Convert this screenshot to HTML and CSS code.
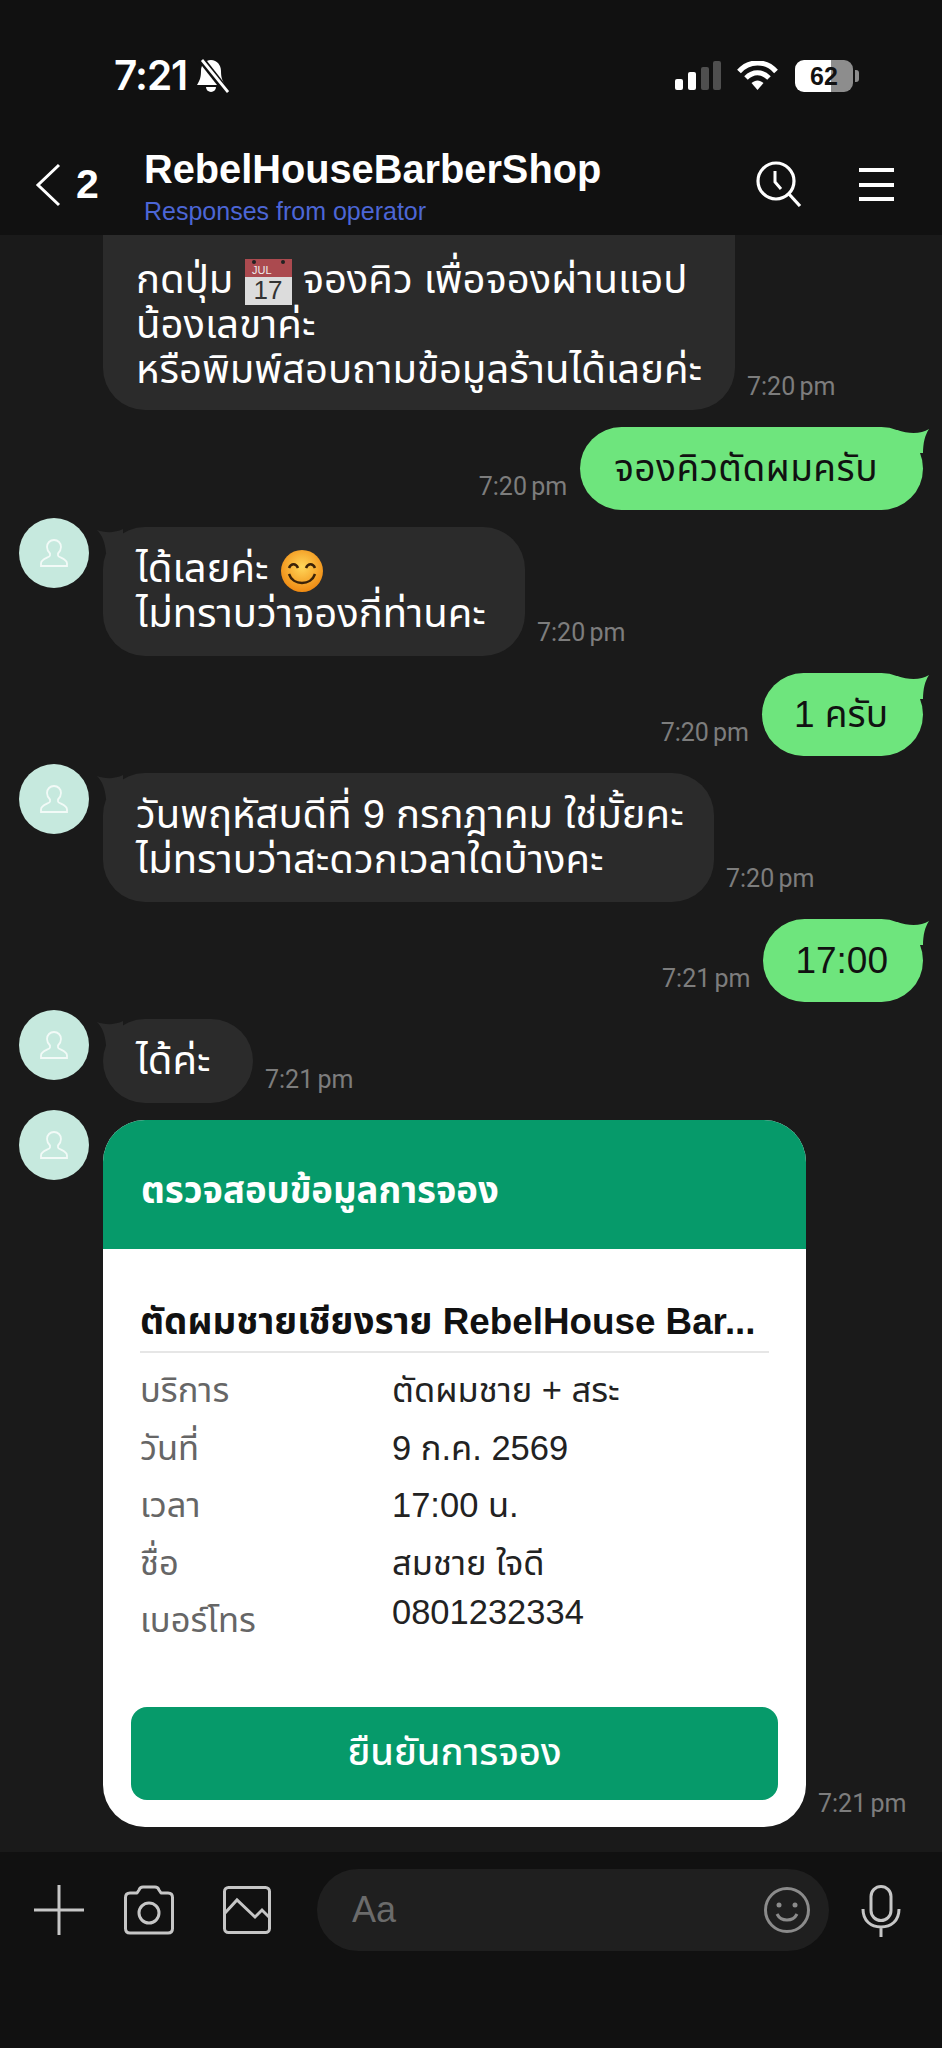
FILE: index.html
```html
<!DOCTYPE html>
<html lang="th">
<head>
<meta charset="utf-8">
<title>RebelHouseBarberShop</title>
<link rel="stylesheet" href="styles.css">
</head>
<body>
<div class="screen">
  <header class="top">
    <div class="status">
      <div class="status-left">
        <span class="clock">7:21</span>
        <svg class="bell" width="33" height="34" viewBox="0 0 33 34"><path d="M15 1c-6 0-10 5-10 11 0 6-1 9-4 14h28c-3-5-4-8-4-14 0-6-4-11-10-11z" fill="#fff"/><path d="M10 28a5 5 0 0 0 10 0z" fill="#fff"/><path d="M5 0l26 33" stroke="#111" stroke-width="7"/><path d="M6 1l26 32" stroke="#fff" stroke-width="2.800"/></svg>
      </div>
      <div class="status-right">
        <svg width="46" height="30" viewBox="0 0 46 30"><rect x="0" y="18" width="8" height="11" rx="2" fill="#fff"/><rect x="13" y="11" width="8" height="18" rx="2" fill="#fff"/><rect x="26" y="6" width="8" height="23" rx="2" fill="#4f4f4f"/><rect x="38" y="0" width="8" height="29" rx="2" fill="#4f4f4f"/></svg>
        <svg class="wifi" width="41" height="30" viewBox="0 0 41 30"><path d="M2 10.5C12-1 29-1 39 10.5" fill="none" stroke="#fff" stroke-width="5"/><path d="M9 17c7-7 16-7 23 0" fill="none" stroke="#fff" stroke-width="5"/><path d="M14.500 22c4-3.400 8-3.400 12 0l-6 7z" fill="#fff"/></svg>
        <div class="battery"><span class="batt-num">62</span></div>
        <span class="batt-cap"></span>
      </div>
    </div>
    <div class="nav">
      <svg class="back" width="28" height="44" viewBox="0 0 28 44"><path d="M25 2L4 22l21 20" fill="none" stroke="#fff" stroke-width="3"/></svg>
      <span class="unread">2</span>
      <div class="titles">
        <div class="title">RebelHouseBarberShop</div>
        <div class="subtitle">Responses from operator</div>
      </div>
      <svg class="search" width="46" height="46" viewBox="0 0 46 46"><circle cx="20" cy="20" r="18" fill="none" stroke="#fff" stroke-width="3.200"/><path d="M33 33l11 12" stroke="#fff" stroke-width="3.200"/><path d="M19 10v11l6 7" fill="none" stroke="#fff" stroke-width="3"/></svg>
      <div class="menu"><span></span><span></span><span></span></div>
    </div>
  </header>

  <main class="chat">
    <div class="row them">
      <div class="avatar-gap"></div>
      <div class="bubble cut w-intro">กดปุ่ม <svg class="cal" width="47" height="46" viewBox="0 0 47 46"><rect width="47" height="46" fill="#dcdcdc"/><rect width="47" height="18" fill="#ab4a4f"/><circle cx="9" cy="3" r="2" fill="#222"/><circle cx="38" cy="3" r="2" fill="#222"/><text x="7" y="15" class="cal-m">JUL</text><text x="23" y="40" class="cal-d" text-anchor="middle">17</text></svg> จองคิว เพื่อจองผ่านแอป<br>น้องเลขาค่ะ<br>หรือพิมพ์สอบถามข้อมูลร้านได้เลยค่ะ</div>
      <span class="time">7:20 pm</span>
    </div>

    <div class="row me gap-a">
      <span class="time">7:20 pm</span>
      <div class="bubble green long">จองคิวตัดผมครับ</div>
    </div>

    <div class="row them gap-b">
      <div class="avatar"><svg width="28" height="28" viewBox="0 0 28 28"><path d="M14 1c-4 0-7 3-7 7 0 3 1.500 5 3 6.500v2c0 2-9 3-9 8V27h26v-2.500c0-5-9-6-9-8v-2c1.500-1.500 3-3.500 3-6.500 0-4-3-7-7-7z" fill="none" stroke="#f2faf7" stroke-width="1.800"/></svg></div>
      <div class="bubble tail w-seats">ได้เลยค่ะ <svg class="smile" width="44" height="44" viewBox="0 0 44 44"><defs><radialGradient id="sm" cx=".5" cy=".4" r=".6"><stop offset="0" stop-color="#ffd75a"/><stop offset="1" stop-color="#f08a12"/></radialGradient></defs><circle cx="22" cy="22" r="21" fill="url(#sm)"/><path d="M9 19c2-5 7-5 9 0M26 19c2-5 7-5 9 0" fill="none" stroke="#3b2208" stroke-width="2.500"/><path d="M9 25c4 12 22 12 26 0" fill="none" stroke="#3b2208" stroke-width="2.500"/></svg><br>ไม่ทราบว่าจองกี่ท่านคะ</div>
      <span class="time">7:20 pm</span>
    </div>

    <div class="row me gap-c">
      <span class="time">7:20 pm</span>
      <div class="bubble green">1 ครับ</div>
    </div>

    <div class="row them gap-b">
      <div class="avatar"><svg width="28" height="28" viewBox="0 0 28 28"><path d="M14 1c-4 0-7 3-7 7 0 3 1.500 5 3 6.500v2c0 2-9 3-9 8V27h26v-2.500c0-5-9-6-9-8v-2c1.500-1.500 3-3.500 3-6.500 0-4-3-7-7-7z" fill="none" stroke="#f2faf7" stroke-width="1.800"/></svg></div>
      <div class="bubble tail w-date">วันพฤหัสบดีที่ 9 กรกฎาคม ใช่มั้ยคะ<br>ไม่ทราบว่าสะดวกเวลาใดบ้างคะ</div>
      <span class="time">7:20 pm</span>
    </div>

    <div class="row me gap-c">
      <span class="time">7:21 pm</span>
      <div class="bubble green">17:00</div>
    </div>

    <div class="row them gap-b">
      <div class="avatar"><svg width="28" height="28" viewBox="0 0 28 28"><path d="M14 1c-4 0-7 3-7 7 0 3 1.500 5 3 6.500v2c0 2-9 3-9 8V27h26v-2.500c0-5-9-6-9-8v-2c1.500-1.500 3-3.500 3-6.500 0-4-3-7-7-7z" fill="none" stroke="#f2faf7" stroke-width="1.800"/></svg></div>
      <div class="bubble tail w-ok">ได้ค่ะ</div>
      <span class="time">7:21 pm</span>
    </div>

    <div class="row them gap-d">
      <div class="avatar"><svg width="28" height="28" viewBox="0 0 28 28"><path d="M14 1c-4 0-7 3-7 7 0 3 1.500 5 3 6.500v2c0 2-9 3-9 8V27h26v-2.500c0-5-9-6-9-8v-2c1.500-1.500 3-3.500 3-6.500 0-4-3-7-7-7z" fill="none" stroke="#f2faf7" stroke-width="1.800"/></svg></div>
      <article class="card">
        <div class="card-head">ตรวจสอบข้อมูลการจอง</div>
        <div class="card-body">
          <div class="shop">ตัดผมชายเชียงราย RebelHouse Bar...</div>
          <dl class="info">
            <dt>บริการ</dt><dd>ตัดผมชาย + สระ</dd>
            <dt>วันที่</dt><dd>9 ก.ค. 2569</dd>
            <dt>เวลา</dt><dd>17:00 น.</dd>
            <dt>ชื่อ</dt><dd>สมชาย ใจดี</dd>
            <dt>เบอร์โทร</dt><dd class="phone-v">0801232334</dd>
          </dl>
          <button class="confirm">ยืนยันการจอง</button>
        </div>
      </article>
      <span class="time">7:21 pm</span>
    </div>
  </main>

  <footer class="bar">
    <svg width="50" height="50" viewBox="0 0 50 50"><path d="M25 0v50M0 25h50" stroke="#c6c6c6" stroke-width="3"/></svg>
    <svg class="cam" width="50" height="50" viewBox="0 0 50 50"><path d="M6 8h7l2-3q1-3 4-3h12q3 0 4 3l2 3h7q4.500 0 4.500 4.500v31q0 4.500-4.500 4.500H6q-4.500 0-4.500-4.500v-31Q1.500 8 6 8z" fill="none" stroke="#c6c6c6" stroke-width="3" stroke-linejoin="round"/><circle cx="25" cy="28" r="10" fill="none" stroke="#c6c6c6" stroke-width="3"/></svg>
    <svg class="pic" width="48" height="50" viewBox="0 0 48 50"><rect x="1.500" y="2.500" width="45" height="45" rx="4" fill="none" stroke="#c6c6c6" stroke-width="3"/><path d="M2 28L14 15l18 17 7-7 8 8" fill="none" stroke="#c6c6c6" stroke-width="3"/></svg>
    <div class="input">
      <span class="ph">Aa</span>
      <svg width="46" height="46" viewBox="0 0 46 46"><circle cx="23" cy="23" r="21.500" fill="none" stroke="#8b8b8b" stroke-width="3"/><circle cx="15" cy="18" r="2.500" fill="#8b8b8b"/><circle cx="31" cy="18" r="2.500" fill="#8b8b8b"/><path d="M13 27c4 8 16 8 20 0" fill="none" stroke="#8b8b8b" stroke-width="3"/></svg>
    </div>
    <svg class="mic" width="40" height="52" viewBox="0 0 40 52"><rect x="10" y="1.500" width="20" height="34" rx="10" fill="none" stroke="#c6c6c6" stroke-width="3"/><path d="M2 24c0 12 8 18 18 18s18-6 18-18M20 42v10" fill="none" stroke="#c6c6c6" stroke-width="3"/></svg>
  </footer>
</div>
</body>
</html>
```

FILE: styles.css
```css
* { box-sizing: border-box; }
html, body { margin: 0; padding: 0; background: #111; }
body { width: 942px; height: 2048px; overflow: hidden; font-family: "Liberation Sans", "Noto Sans", sans-serif; }
.screen { width: 942px; height: 2048px; display: flex; flex-direction: column; overflow: hidden; background: #111; }

.top { height: 235px; background: #111; flex: none; }
.status { height: 135px; padding: 53px 83px 0 114px; display: flex; justify-content: space-between; align-items: flex-start; }
.status-left { display: flex; align-items: center; gap: 9px; }
.clock { color: #fff; font-size: 40.500px; font-weight: 600; font-family: Inter, "Liberation Sans", sans-serif; letter-spacing: -1px; line-height: 46px; }
.status-right { display: flex; align-items: center; height: 46px; }
.wifi { margin-left: 16px; }
.battery { margin-left: 17px; width: 58px; height: 32px; border-radius: 9px; background: linear-gradient(90deg, #fff 0 62%, #8d8d8d 62% 100%); display: flex; align-items: center; justify-content: center; }
.batt-num { color: #111; font-size: 25px; font-weight: 700; line-height: 1; }
.batt-cap { width: 4px; height: 12px; background: #8d8d8d; border-radius: 0 3px 3px 0; margin-left: 2px; }

.nav { height: 100px; display: flex; align-items: flex-start; padding-left: 34px; }
.back { margin-top: 28px; flex: none; }
.unread { color: #fff; font-size: 41px; font-weight: 700; margin-left: 14px; margin-top: 27px; line-height: 44px; width: 68px; }
.titles { flex: 1; }
.title { color: #fff; font-size: 39.750px; font-weight: 700; line-height: 46px; margin-top: 11px; }
.subtitle { color: #4c66d6; font-size: 25px; line-height: 28px; margin-top: 5px; }
.search { flex: none; margin-top: 26px; margin-right: 57px; }
.menu { flex: none; width: 35px; margin-top: 33px; margin-right: 48px; display: flex; flex-direction: column; gap: 10.500px; }
.menu span { display: block; height: 4px; background: #fff; }

.chat { height: 1617px; flex: none; background: #1a1a1a; overflow: hidden; padding: 0 19px; font-family: "Liberation Sans", "Noto Sans Thai", "Noto Sans", sans-serif; }
.row { display: flex; align-items: flex-end; }
.row.me { justify-content: flex-end; gap: 13px; }
.row.them .time { margin-left: 12px; }
.gap-a { margin-top: 17px; }
.gap-b { margin-top: 8px; }
.gap-c { margin-top: 17px; }
.gap-d { margin-top: 7px; }
.avatar-gap { width: 84px; flex: none; }
.avatar { width: 70px; height: 70px; border-radius: 50%; background: #c6e9de; flex: none; align-self: flex-start; margin-right: 14px; display: flex; align-items: center; justify-content: center; }
.bubble { color: #fff; font-size: 40px; line-height: 45px; background: #2b2b2b; border-radius: 42px; padding: 19px 0 20px 33px; position: relative; white-space: nowrap; }
.row.them .bubble.tail { margin-top: 9px; }
.bubble.cut { border-radius: 0 0 42px 42px; padding-top: 22px; height: 175px; }
.w-intro { width: 632px; }
.w-seats { width: 422px; }
.w-date { width: 611px; }
.w-ok { width: 150px; }
.bubble.green { background: #6ee57d; color: #111; font-size: 37px; padding: 19px 35px 19px 32px; }
.bubble.green.long { padding: 19px 45px 19px 34px; letter-spacing: .5px; }
.bubble.green::after { content: ""; position: absolute; top: 0; right: -6px; width: 32px; height: 26px; background: #6ee57d; clip-path: path('M32 2 C24 7 12 7 0 3 L0 26 L26 26 C26 16 28 8 32 2Z'); }
.bubble.tail::before { content: ""; position: absolute; top: 0; left: -6px; width: 26px; height: 26px; background: #2b2b2b; clip-path: path('M0 3 C8 6 18 6 26 2 L26 26 L9 26 C8 15 5 8 0 3Z'); }
.cal, .smile { vertical-align: middle; margin: -6px 0; }
.cal-m { fill: #eee; font-size: 11px; font-family: "Liberation Sans", sans-serif; }
.cal-d { fill: #333; font-size: 26px; font-family: "Liberation Sans", sans-serif; }
.time { color: #7d7d7d; font-size: 25px; word-spacing: -2px; line-height: 26px; font-family: Roboto, "Liberation Sans", sans-serif; white-space: nowrap; margin-bottom: 10px; }

.card { width: 703px; height: 707px; background: #fff; border-radius: 42px; overflow: hidden; flex: none; margin-top: 10px; }
.card-head { height: 129px; background: #069a6a; color: #fff; font-size: 36.500px; font-weight: 700; padding: 14px 38px 0; display: flex; align-items: center; }
.card-body { padding: 44px 28px 0; }
.shop { font-size: 36.800px; font-weight: 700; color: #111; margin: 0 9px; white-space: nowrap; line-height: 58px; }
.info { margin: 0 9px; padding-top: 9px; border-top: 2px solid #e6e6e6; display: grid; grid-template-columns: 252px 1fr; }
.info dt { color: #666; font-size: 34.500px; line-height: 57.500px; margin: 0; }
.info dd { color: #222; font-size: 34.500px; line-height: 57.500px; margin: 0; }
.info .phone-v { margin-top: -8px; margin-bottom: 8px; }
.confirm { display: block; width: 647px; height: 93px; border: 0; border-radius: 16px; background: #069a6a; color: #fff; font-size: 38px; font-weight: 500; font-family: inherit; margin: 57px 0 0 0; padding: 0; }

.bar { flex: none; height: 196px; background: #111; display: flex; align-items: flex-start; padding: 33px 0 0 34px; }
.cam { margin-left: 40px; }
.pic { margin-left: 49px; }
.input { width: 512px; height: 82px; margin: -16px 0 0 46px; border-radius: 41px; background: #1f1f1f; display: flex; align-items: center; justify-content: space-between; padding: 0 19px 0 35px; }
.ph { color: #6b6b6b; font-size: 36px; font-family: "Liberation Sans", sans-serif; }
.mic { margin-left: 32px; }
```
